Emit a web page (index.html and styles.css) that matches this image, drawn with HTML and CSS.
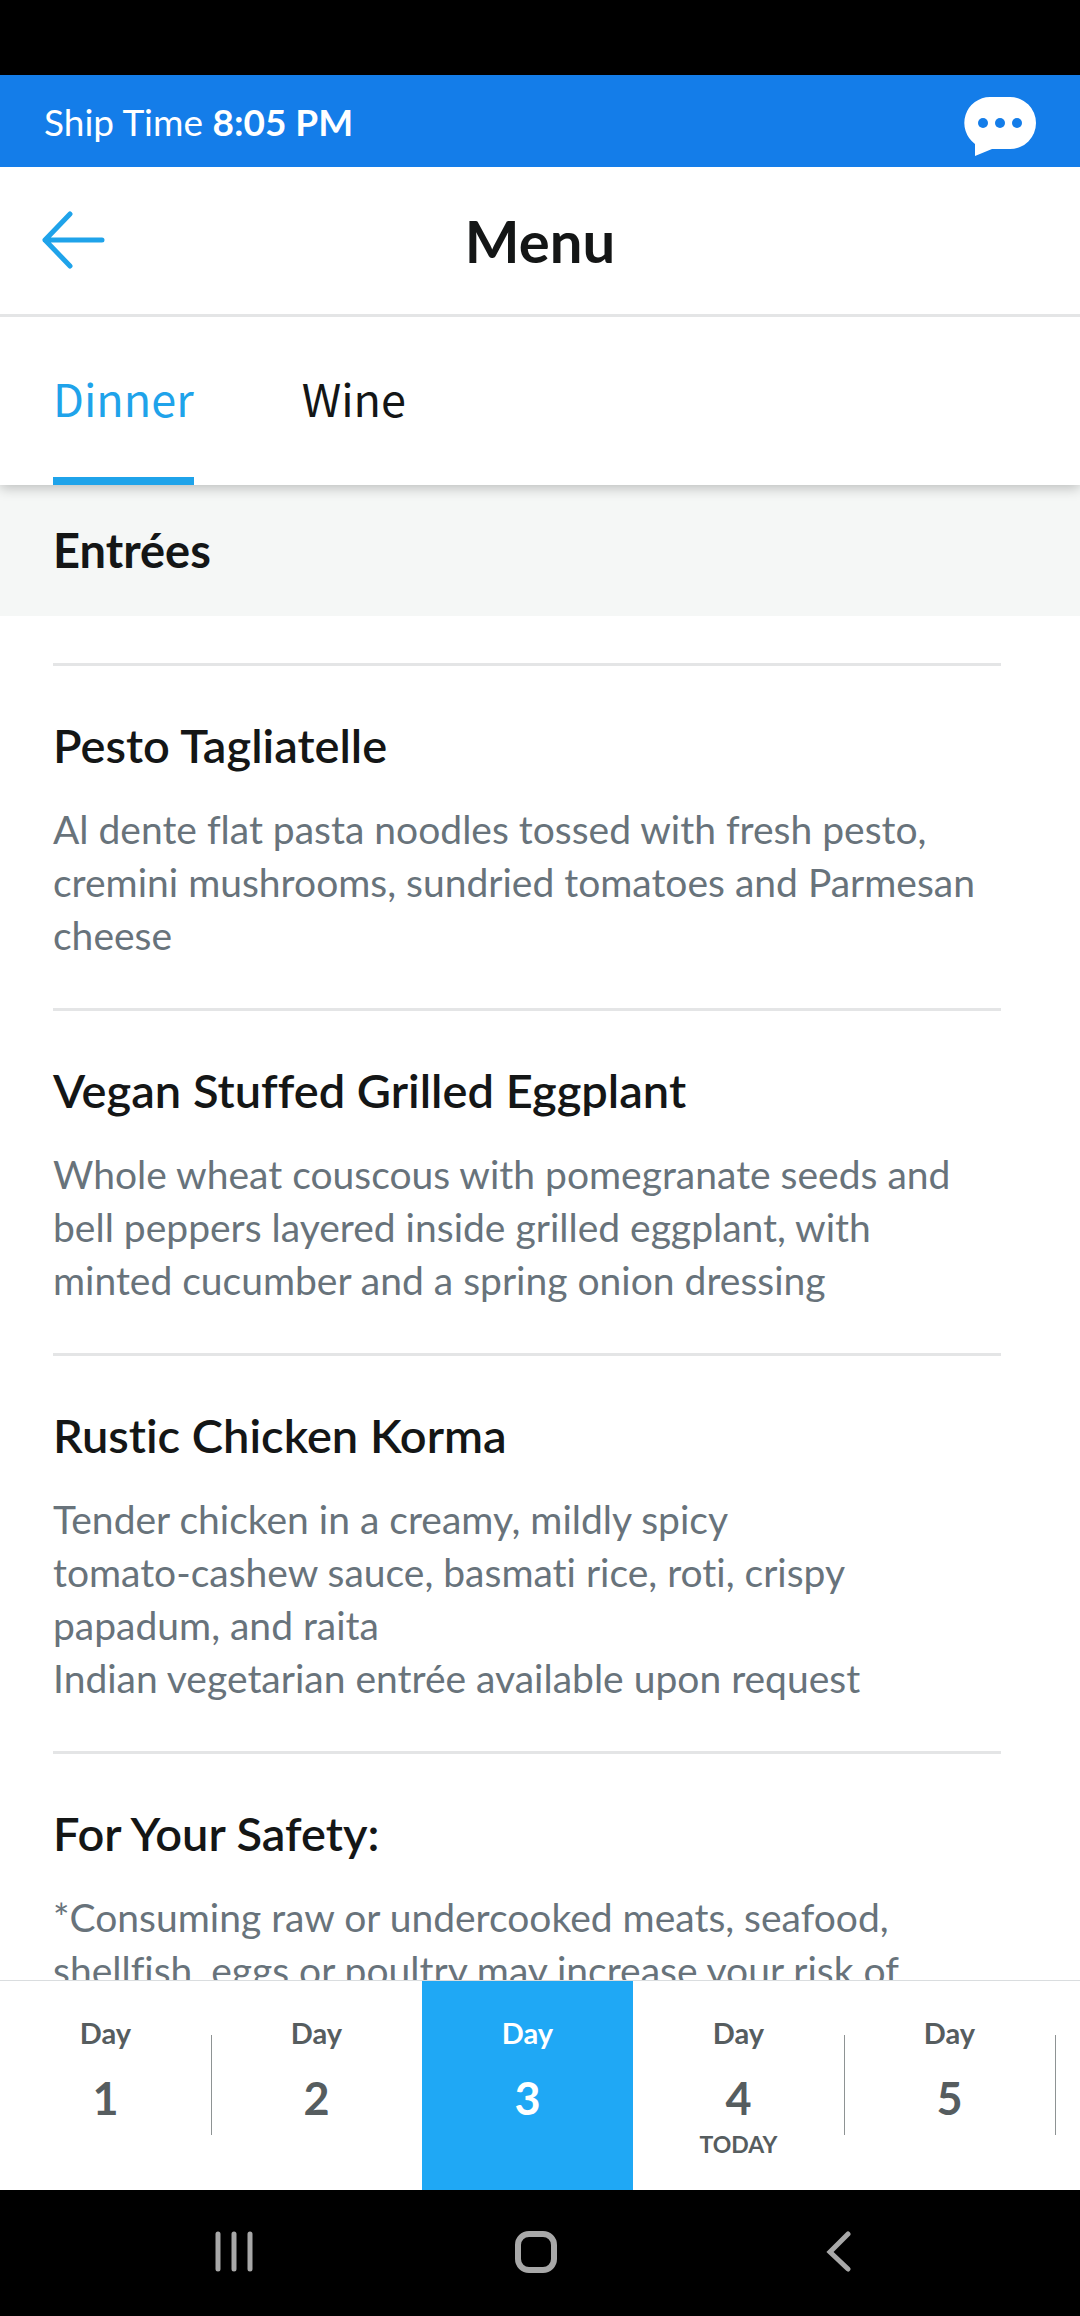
FILE: index.html
```html
<!DOCTYPE html>
<html lang="en">
<head>
    <meta charset="UTF-8">
    <meta name="viewport" content="width=device-width, initial-scale=1.0">
    <title>Menu</title>
    <link rel="stylesheet" href="styles.css">
</head>
<body>

<div class="status-bar"></div>

<div class="ship-bar">
    <p class="ship-time">Ship Time <strong>8:05 PM</strong></p>
    <button type="button" class="icon-button" aria-label="Chat">
        <svg width="72" height="60" viewBox="0 0 72 60">
            <path fill="#fff" d="M26 0H46A26 26 0 0 1 46 52H28L11 59V47A26 26 0 0 1 26 0Z"/>
            <circle cx="19" cy="26" r="5" fill="#147de9"/>
            <circle cx="36" cy="26" r="5" fill="#147de9"/>
            <circle cx="53" cy="26" r="5" fill="#147de9"/>
        </svg>
    </button>
</div>

<header class="page-header">
    <button type="button" class="icon-button" aria-label="Back">
        <svg width="64" height="60" viewBox="0 0 64 60">
            <path fill="none" stroke="#1fa3ea" stroke-width="5" stroke-linecap="round" stroke-linejoin="round" d="M28 3L3 29L28 55M3 29H60"/>
        </svg>
    </button>
    <h1>Menu</h1>
</header>

<nav class="tabs">
    <a href="#dinner" class="tab active">Dinner</a>
    <a href="#wine" class="tab">Wine</a>
</nav>

<main class="content" id="dinner">
    <h2 class="section-title">Entrées</h2>
    <div class="dishes">
        <article class="dish">
            <h3>Pesto Tagliatelle</h3>
            <p>Al dente flat pasta noodles tossed with fresh pesto,<br>
            cremini mushrooms, sundried tomatoes and Parmesan<br>
            cheese</p>
        </article>
        <article class="dish">
            <h3>Vegan Stuffed Grilled Eggplant</h3>
            <p>Whole wheat couscous with pomegranate seeds and<br>
            bell peppers layered inside grilled eggplant, with<br>
            minted cucumber and a spring onion dressing</p>
        </article>
        <article class="dish">
            <h3>Rustic Chicken Korma</h3>
            <p>Tender chicken in a creamy, mildly spicy<br>
            tomato-cashew sauce, basmati rice, roti, crispy<br>
            papadum, and raita<br>
            Indian vegetarian entrée available upon request</p>
        </article>
        <article class="dish">
            <h3>For Your Safety:</h3>
            <p>*Consuming raw or undercooked meats, seafood,<br>
            shellfish, eggs or poultry may increase your risk of</p>
        </article>
    </div>
</main>

<div class="days">
    <button type="button" class="day divided"><span>Day</span><b>1</b></button>
    <button type="button" class="day"><span>Day</span><b>2</b></button>
    <button type="button" class="day active"><span>Day</span><b>3</b></button>
    <button type="button" class="day divided"><span>Day</span><b>4</b><small>TODAY</small></button>
    <button type="button" class="day divided"><span>Day</span><b>5</b></button>
</div>

<div class="system-nav">
    <button type="button" aria-label="Recent apps">
        <svg width="44" height="44" viewBox="0 0 44 44">
            <path stroke="#a8a8a8" stroke-width="5" stroke-linecap="round" d="M6 3V38M22 3V38M38 3V38"/>
        </svg>
    </button>
    <button type="button" aria-label="Home">
        <svg width="44" height="44" viewBox="0 0 44 44">
            <rect x="4" y="3" width="36" height="36" rx="11" fill="none" stroke="#a8a8a8" stroke-width="6"/>
        </svg>
    </button>
    <button type="button" aria-label="Go back">
        <svg width="44" height="44" viewBox="0 0 44 44">
            <path fill="none" stroke="#a8a8a8" stroke-width="5" stroke-linecap="round" d="M32 3L14 21L32 38"/>
        </svg>
    </button>
</div>

</body>
</html>
```
FILE: styles.css
```css
* {
    box-sizing: border-box;
}

body {
    font-family: Lato, sans-serif;
    font-variant-ligatures: none;
    margin: 0;
    height: 100vh;
    display: flex;
    flex-direction: column;
    overflow: hidden;
    background-color: #fff;
    color: #141616;
}

h1, h2, h3, p {
    margin: 0;
}

button {
    font-family: inherit;
    background: none;
    border: none;
    padding: 0;
    cursor: pointer;
}

svg {
    display: block;
}

.status-bar {
    flex: none;
    height: 75px;
    background-color: #000;
}

.ship-bar {
    flex: none;
    display: flex;
    justify-content: space-between;
    align-items: center;
    height: 92px;
    padding: 12px 44px 0;
    background-color: #147de9;
}

.ship-time {
    font-size: 37px;
    line-height: 44px;
    padding-bottom: 10px;
    color: #fff;
}

.page-header {
    flex: none;
    display: grid;
    grid-template-columns: 64px 1fr 64px;
    align-items: center;
    height: 150px;
    padding: 0 42px;
    border-bottom: 3px solid #e4e5e6;
}

.page-header h1 {
    font-size: 58px;
    line-height: 64px;
    text-align: center;
}

.tabs {
    flex: none;
    display: flex;
    gap: 108px;
    height: 168px;
    padding: 0 53px;
    background-color: #fff;
    box-shadow: 0 3px 12px rgba(0, 0, 0, 0.24);
    /* keep the shadow below the bar only */
    clip-path: inset(0 0 -20px 0);
    z-index: 1;
}

.tab {
    display: flex;
    align-items: center;
    font-family: "Noto Sans CJK JP", sans-serif;
    font-size: 45px;
    color: #141616;
    text-decoration: none;
    border-bottom: 8px solid transparent;
}

.tab.active {
    color: #1fa3ea;
    border-bottom-color: #1fa3ea;
}

.content {
    flex: 1;
    min-height: 0;
    overflow: hidden;
}

.section-title {
    font-size: 47px;
    line-height: 54px;
    padding: 38px 53px 39px;
    margin-bottom: 47px;
    background-color: #f5f7f6;
}

.dishes {
    margin: 0 79px 0 53px;
}

.dish {
    padding: 52px 0 46px;
    border-top: 3px solid #e4e5e6;
}

.dish h3 {
    font-size: 47px;
    font-weight: 600;
    line-height: 54px;
    margin-bottom: 31px;
}

.dish p {
    font-size: 39px;
    line-height: 53px;
    color: #68737b;
    white-space: nowrap;
}

.days {
    flex: none;
    display: flex;
    height: 210px;
    background-color: #fff;
    border-top: 1px solid #dadddf;
}

.day {
    position: relative;
    flex: 0 0 211px;
    display: flex;
    flex-direction: column;
    align-items: center;
    padding-top: 34px;
    color: #565d5f;
}

.day.active {
    background-color: #1fa8f5;
    color: #fff;
}

.day span {
    font-size: 29px;
    font-weight: bold;
    line-height: 36px;
}

.day b {
    font-size: 45px;
    line-height: 54px;
    margin-top: 20px;
}

.day small {
    font-size: 23px;
    font-weight: bold;
    line-height: 38px;
}

/* short line between two days */
.day.divided::after {
    content: "";
    position: absolute;
    top: 54px;
    right: -1px;
    width: 1px;
    height: 100px;
    background-color: #8e9394;
}

.system-nav {
    flex: none;
    display: flex;
    justify-content: center;
    height: 126px;
    padding-right: 8px;
    background-color: #000;
}

.system-nav button {
    display: flex;
    justify-content: center;
    align-items: center;
    width: 302px;
}
```
